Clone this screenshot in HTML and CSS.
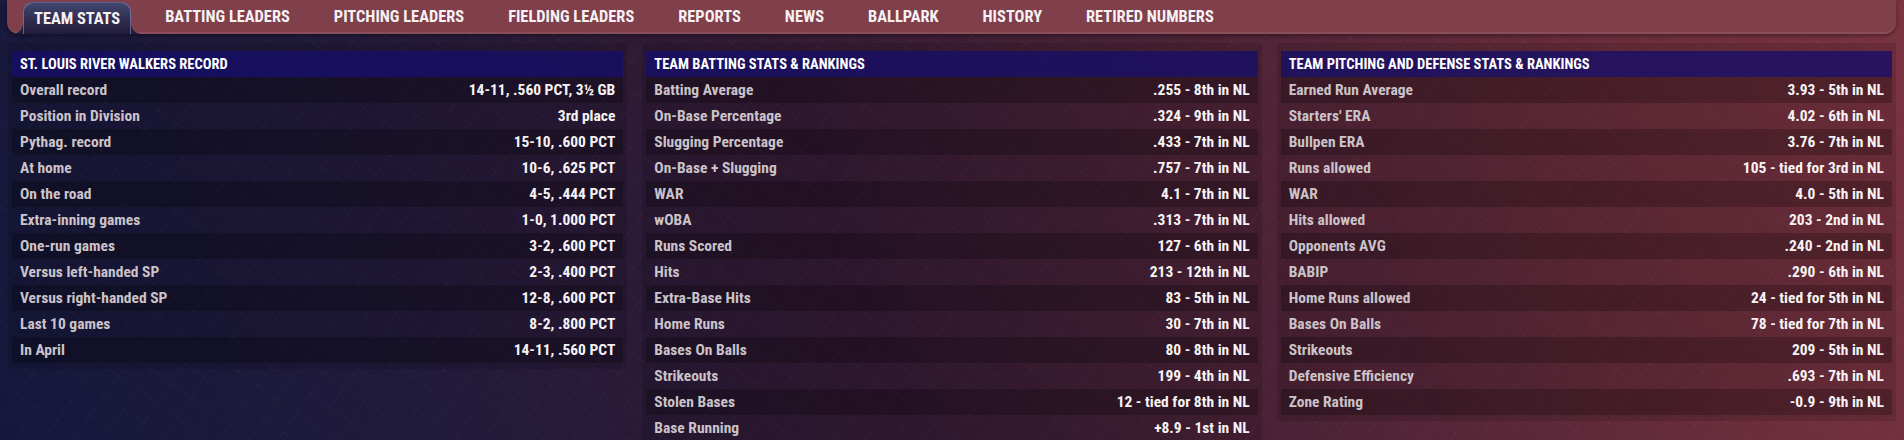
FILE: index.html
```html
<!DOCTYPE html>
<html lang="en">
<head>
    <meta charset="UTF-8">
    <meta name="viewport" content="width=device-width, initial-scale=1.0">
    <title>Team Stats</title>
    <link rel="stylesheet" href="styles.css">
</head>
<body>
    <nav class="tabs">
        <a class="tab active">TEAM STATS</a>
        <a class="tab">BATTING LEADERS</a>
        <a class="tab">PITCHING LEADERS</a>
        <a class="tab">FIELDING LEADERS</a>
        <a class="tab">REPORTS</a>
        <a class="tab">NEWS</a>
        <a class="tab">BALLPARK</a>
        <a class="tab">HISTORY</a>
        <a class="tab">RETIRED NUMBERS</a>
    </nav>

    <main class="panels">
        <section class="panel">
            <h2 class="panel-title">ST. LOUIS RIVER WALKERS RECORD</h2>
            <div class="rows">
                <div class="row"><span>Overall record</span><span class="val">14-11, .560 PCT, 3½ GB</span></div>
                <div class="row"><span>Position in Division</span><span class="val">3rd place</span></div>
                <div class="row"><span>Pythag. record</span><span class="val">15-10, .600 PCT</span></div>
                <div class="row"><span>At home</span><span class="val">10-6, .625 PCT</span></div>
                <div class="row"><span>On the road</span><span class="val">4-5, .444 PCT</span></div>
                <div class="row"><span>Extra-inning games</span><span class="val">1-0, 1.000 PCT</span></div>
                <div class="row"><span>One-run games</span><span class="val">3-2, .600 PCT</span></div>
                <div class="row"><span>Versus left-handed SP</span><span class="val">2-3, .400 PCT</span></div>
                <div class="row"><span>Versus right-handed SP</span><span class="val">12-8, .600 PCT</span></div>
                <div class="row"><span>Last 10 games</span><span class="val">8-2, .800 PCT</span></div>
                <div class="row"><span>In April</span><span class="val">14-11, .560 PCT</span></div>
            </div>
        </section>

        <section class="panel">
            <h2 class="panel-title">TEAM BATTING STATS &amp; RANKINGS</h2>
            <div class="rows">
                <div class="row"><span>Batting Average</span><span class="val">.255 - 8th in NL</span></div>
                <div class="row"><span>On-Base Percentage</span><span class="val">.324 - 9th in NL</span></div>
                <div class="row"><span>Slugging Percentage</span><span class="val">.433 - 7th in NL</span></div>
                <div class="row"><span>On-Base + Slugging</span><span class="val">.757 - 7th in NL</span></div>
                <div class="row"><span>WAR</span><span class="val">4.1 - 7th in NL</span></div>
                <div class="row"><span>wOBA</span><span class="val">.313 - 7th in NL</span></div>
                <div class="row"><span>Runs Scored</span><span class="val">127 - 6th in NL</span></div>
                <div class="row"><span>Hits</span><span class="val">213 - 12th in NL</span></div>
                <div class="row"><span>Extra-Base Hits</span><span class="val">83 - 5th in NL</span></div>
                <div class="row"><span>Home Runs</span><span class="val">30 - 7th in NL</span></div>
                <div class="row"><span>Bases On Balls</span><span class="val">80 - 8th in NL</span></div>
                <div class="row"><span>Strikeouts</span><span class="val">199 - 4th in NL</span></div>
                <div class="row"><span>Stolen Bases</span><span class="val">12 - tied for 8th in NL</span></div>
                <div class="row"><span>Base Running</span><span class="val">+8.9 - 1st in NL</span></div>
            </div>
        </section>

        <section class="panel">
            <h2 class="panel-title">TEAM PITCHING AND DEFENSE STATS &amp; RANKINGS</h2>
            <div class="rows">
                <div class="row"><span>Earned Run Average</span><span class="val">3.93 - 5th in NL</span></div>
                <div class="row"><span>Starters' ERA</span><span class="val">4.02 - 6th in NL</span></div>
                <div class="row"><span>Bullpen ERA</span><span class="val">3.76 - 7th in NL</span></div>
                <div class="row"><span>Runs allowed</span><span class="val">105 - tied for 3rd in NL</span></div>
                <div class="row"><span>WAR</span><span class="val">4.0 - 5th in NL</span></div>
                <div class="row"><span>Hits allowed</span><span class="val">203 - 2nd in NL</span></div>
                <div class="row"><span>Opponents AVG</span><span class="val">.240 - 2nd in NL</span></div>
                <div class="row"><span>BABIP</span><span class="val">.290 - 6th in NL</span></div>
                <div class="row"><span>Home Runs allowed</span><span class="val">24 - tied for 5th in NL</span></div>
                <div class="row"><span>Bases On Balls</span><span class="val">78 - tied for 7th in NL</span></div>
                <div class="row"><span>Strikeouts</span><span class="val">209 - 5th in NL</span></div>
                <div class="row"><span>Defensive Efficiency</span><span class="val">.693 - 7th in NL</span></div>
                <div class="row"><span>Zone Rating</span><span class="val">-0.9 - 9th in NL</span></div>
            </div>
        </section>
    </main>
</body>
</html>
```

FILE: styles.css
```css
html, body {
    height: 440px;
    overflow: hidden;
}

body {
    margin: 0;
    font-family: "Liberation Sans Narrow", "Roboto Condensed", "DejaVu Sans Condensed", Roboto, sans-serif;
    color: #f2eef0;
    background-color: #2a1a33;
    background-image:
        repeating-linear-gradient(125deg, rgba(255, 255, 255, 0.022) 0 1px, transparent 1px 24px),
        repeating-linear-gradient(35deg, rgba(255, 255, 255, 0.018) 0 1px, transparent 1px 24px),
        linear-gradient(72deg, #15183c 0%, #211a3a 22%, #351b34 45%, #4d2336 65%, #6a2d3c 85%, #7a3341 100%);
}

/* top tab strip */
.tabs {
    display: flex;
    gap: 24px;
    height: 34px;
    margin: 0 8px 0 7px;
    padding-left: 16px;
    background-color: #7f3f4b;
    border-radius: 0 0 12px 12px;
    box-shadow: inset 0 -2px 0 rgba(255, 255, 255, 0.08), 0 2px 4px rgba(0, 0, 0, 0.35);
}

.tab {
    position: relative;
    padding: 0 10px;
    line-height: 34px;
    font-size: 16.4px;
    font-weight: bold;
    color: #f6f1f2;
    white-space: nowrap;
    cursor: pointer;
}

.tab.active {
    margin-top: 2px;
    line-height: 31px;
    background: linear-gradient(#42466f, #2a2647 70%, #221d3c);
    border: 1px solid rgba(160, 165, 215, 0.5);
    border-bottom: none;
    border-radius: 10px 10px 0 0;
}

.tab.active::before,
.tab.active::after {
    content: "";
    position: absolute;
    bottom: 0;
    width: 10px;
    height: 10px;
}

.tab.active::before {
    left: -11px;
    background: radial-gradient(circle at 0 0, transparent 9.5px, #221d3c 10px);
}

.tab.active::after {
    right: -11px;
    background: radial-gradient(circle at 100% 0, transparent 9.5px, #221d3c 10px);
}

/* stat panels */
.panels {
    display: grid;
    grid-template-columns: repeat(3, 1fr);
    gap: 15px;
    padding: 9px 8px 0 8px;
    align-items: start;
}

.panel {
    padding: 8px 4px 6px;
    background-color: rgba(0, 0, 0, 0.12);
}

.panel-title {
    margin: 0;
    height: 26px;
    line-height: 27px;
    padding: 0 8px;
    font-size: 14.5px;
    font-weight: bold;
    color: #ffffff;
    background-color: rgba(22, 14, 105, 0.78);
}

.row {
    display: flex;
    justify-content: space-between;
    align-items: center;
    height: 26px;
    padding: 0 8px;
    font-size: 15.5px;
    font-weight: bold;
    color: #cbc3c9;
}

.row:nth-child(odd) {
    background-color: rgba(0, 0, 0, 0.22);
}

.row .val {
    color: #f7f3f5;
}
```
